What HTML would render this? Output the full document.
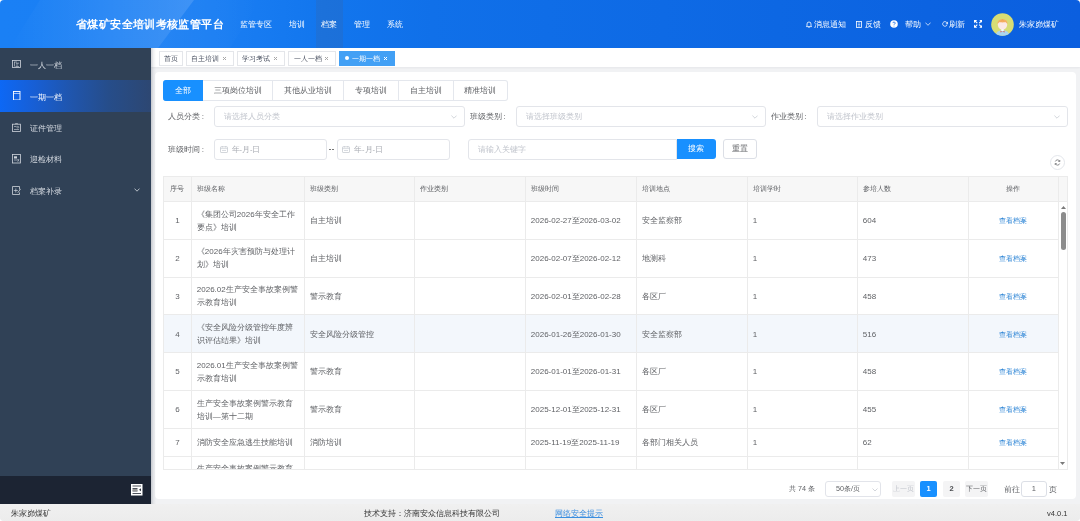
<!DOCTYPE html>
<html><head><meta charset="utf-8">
<style>
*{box-sizing:border-box;margin:0;padding:0}
html,body{width:1080px;height:521px;overflow:hidden;background:#fff}
body{font-family:"Liberation Sans",sans-serif;position:relative;color:#606266;font-size:8px}
.abs{position:absolute}
svg{display:block}
#app{will-change:transform;position:absolute;left:0;top:0;width:1080px;height:521px;border-radius:4px;overflow:hidden;background:#f1f2f4}
/* header */
#hdr{left:0;top:0;width:1080px;height:48px;background:linear-gradient(90deg,#1a80f5 0%,#1a7ef3 20%,#1276ee 30%,#1070e9 40%,#0d67e3 72%,#0b5fdf 100%);overflow:hidden}
#title{left:76px;top:18.3px;font-size:11.2px;letter-spacing:.38px;line-height:13px;font-weight:bold;color:#fff;white-space:nowrap}
.nav{top:20px;font-size:8px;line-height:10px;color:#fff;white-space:nowrap}
#navact{left:316px;top:0;width:27px;height:48px;background:rgba(70,95,140,.2)}
.hr{top:20.3px;font-size:8px;line-height:10px;color:#fff;white-space:nowrap}
/* sidebar */
#side{left:0;top:48px;width:151px;height:455.5px;background:#304156}
#sidebot{left:0;top:476px;width:151px;height:27.5px;background:#1c2433}
.mi{left:0;width:151px;height:31.6px;color:#d5dae1;font-size:8px}
.mi span{position:absolute;left:30px;top:12.6px;line-height:10px;white-space:nowrap}
.mi svg{position:absolute;left:11.5px;top:11.5px}
#miact{background:linear-gradient(90deg,#0d68f5 0%,#175fd6 22%,#1f56b0 45%,#264d8a 72%,#2d4772 100%);color:#fff;height:32px}
/* footer */
#foot{left:0;top:503.5px;width:1080px;height:18px;background:linear-gradient(#f0f0f0,#ececec);font-size:7.5px;color:#333}
#foot div{line-height:11px;white-space:nowrap}
/* tabs */
#tabs{left:151px;top:48px;width:929px;height:19px;background:#fff;box-shadow:0 1px 2px rgba(0,21,41,.05)}
.tag{top:3px;height:14.8px;border:1px solid #e4e6ea;background:#fff;font-size:7px;color:#495060;line-height:13.8px;padding:0 0 0 4.3px;white-space:nowrap}
.tag i{position:absolute;right:6.6px;top:5.2px;width:3px;height:3px;background:linear-gradient(45deg,transparent 42%,#a8a8a8 42%,#a8a8a8 58%,transparent 58%),linear-gradient(-45deg,transparent 42%,#a8a8a8 42%,#a8a8a8 58%,transparent 58%)}
/* card */
#card{left:155px;top:72.2px;width:921px;height:426.4px;background:#fff;border-radius:4px}
.ft{top:80px;height:20.6px;border:1px solid #e4e7ed;border-left:none;font-size:8px;color:#606266;line-height:20px;text-align:center;white-space:nowrap}
.lbl{font-size:8px;line-height:10px;color:#606266;white-space:nowrap}
.inp{height:20.5px;border:1px solid #e3e5ea;border-radius:3px;background:#fff;font-size:7.5px;color:#c0c4cc;line-height:19.5px;padding-left:9px;white-space:nowrap}
.chev{position:absolute;right:7px;top:8px}
.thc{top:0;height:25px;line-height:24.2px;padding:0 5px 0 4.8px;font-size:7.2px;color:#606266;border-right:1px solid #ebebeb;border-bottom:1px solid #ebebeb;white-space:nowrap}
.tr{left:0;width:895px}
.td .cell{position:relative;top:.3px}
.td{top:0;border-right:1px solid #ebebeb;border-bottom:1px solid #ebebeb;display:flex;align-items:center;padding:0 5px 0 4.8px;font-size:8px;color:#606266;line-height:13px}
.td .cell{width:100%;white-space:nowrap}
.lnk{color:#2f86d6;font-size:7px}
.pg{font-size:7.5px;line-height:10px;color:#606266;white-space:nowrap}
.pgb{top:481.2px;height:15.6px;line-height:15.6px;background:#f4f4f5;font-size:7.5px;color:#606266;text-align:center;border-radius:2px;white-space:nowrap}
</style></head><body>
<div id="app">
 <div id="hdr" class="abs">
  <svg class="abs" style="left:0;top:0" width="1080" height="48">
   <defs><linearGradient id="hg1" x1="0" y1="0" x2="1" y2="0"><stop offset="0" stop-color="#fff" stop-opacity="0"/><stop offset="1" stop-color="#fff" stop-opacity=".16"/></linearGradient>
   <linearGradient id="hg2" x1="0" y1="0" x2="1" y2="0"><stop offset="0" stop-color="#fff" stop-opacity=".05"/><stop offset="1" stop-color="#fff" stop-opacity="0"/></linearGradient></defs>
   <polygon points="40,0 194,0 158,48 10,48" fill="url(#hg1)"/>
   <polygon points="194,0 260,0 230,48 158,48" fill="url(#hg2)"/>
  </svg>
  <div id="navact" class="abs"></div>
  <div id="title" class="abs">省煤矿安全培训考核监管平台</div>
  <div class="abs nav" style="left:240px">监管专区</div>
  <div class="abs nav" style="left:289px">培训</div>
  <div class="abs nav" style="left:321px">档案</div>
  <div class="abs nav" style="left:354px">管理</div>
  <div class="abs nav" style="left:387px">系统</div>
  <!-- bell -->
  <svg class="abs" style="left:806px;top:20.5px" width="6" height="7" viewBox="0 0 6 7"><path d="M1 5V3a2 2 0 0 1 4 0v2l.6.6H.4z M2.3 6.3h1.4" stroke="#fff" stroke-width="0.8" fill="none"/></svg>
  <div class="abs hr" style="left:813.5px">消息通知</div>
  <!-- feedback -->
  <svg class="abs" style="left:855.5px;top:20.5px" width="6" height="7" viewBox="0 0 6 7"><rect x=".5" y=".5" width="5" height="6" stroke="#fff" stroke-width=".8" fill="none"/><path d="M1.8 2h2.4M1.8 3.5h2.4M1.8 5h2.4" stroke="#fff" stroke-width=".6"/></svg>
  <div class="abs hr" style="left:865px">反馈</div>
  <!-- help circle -->
  <svg class="abs" style="left:889.7px;top:19.6px" width="8" height="8" viewBox="0 0 8 8"><circle cx="4" cy="4" r="3.8" fill="#fff"/><path d="M2.9 3.1a1.1 1.1 0 1 1 1.6 1c-.4.2-.5.4-.5.8" stroke="#0d63e1" stroke-width=".8" fill="none"/><circle cx="4" cy="6" r=".45" fill="#0d63e1"/></svg>
  <div class="abs hr" style="left:905px">帮助</div>
  <svg class="abs" style="left:925px;top:22.3px" width="6" height="4" viewBox="0 0 6 4"><path d="M.4.6L3 3.3 5.6.6" stroke="#fff" stroke-width=".7" fill="none"/></svg>
  <!-- refresh -->
  <svg class="abs" style="left:942px;top:21px" width="6" height="6" viewBox="0 0 6 6"><path d="M5.2 2.4A2.3 2.3 0 1 0 5.1 3.8" stroke="#fff" stroke-width=".8" fill="none"/><path d="M5.6 .9v1.9H3.8" stroke="#fff" stroke-width=".8" fill="none"/></svg>
  <div class="abs hr" style="left:948.5px">刷新</div>
  <!-- fullscreen -->
  <svg class="abs" style="left:973.6px;top:20.3px" width="8.5" height="7.8" viewBox="0 0 8.5 7.8"><path d="M0 0h3.2L0 3.2z M8.5 0H5.3L8.5 3.2z M0 7.8h3.2L0 4.6z M8.5 7.8H5.3L8.5 4.6z" fill="#fff"/><path d="M1 1L3.3 3.1M7.5 1L5.2 3.1M1 6.8L3.3 4.7M7.5 6.8L5.2 4.7" stroke="#fff" stroke-width="1.1"/></svg>
  <!-- avatar -->
  <svg class="abs" style="left:990.5px;top:13px" width="23" height="23" viewBox="0 0 23 23">
   <defs><clipPath id="av"><circle cx="11.5" cy="11.5" r="11.3"/></clipPath></defs>
   <circle cx="11.5" cy="11.5" r="11.3" fill="#d7dd74"/>
   <g clip-path="url(#av)">
    <path d="M4.6 23c0-3.6 2.6-5.8 6.9-5.8s6.9 2.2 6.9 5.8z" fill="#a9d6f0"/>
    <rect x="10.3" y="15.5" width="2.4" height="2.4" fill="#fff"/>
    <path d="M9.4 17.8l2.1.9 2.1-.9v1.8l-2.1-.8-2.1.8z" fill="#e07060"/>
    <path d="M6.8 11.5c0-1.5.5-2.4 1-2.6h7.4c.5.2 1 1.1 1 2.6 0 3-2.1 5-4.7 5s-4.7-2-4.7-5z" fill="#fbe9e4"/>
    <path d="M6.6 11.2c-.4-3.2 1.8-5 4.9-5s5.3 1.8 4.9 5c-.6-1-1.4-1.8-2.3-2.1-.9.3-1.8.4-2.6.4s-1.7-.1-2.6-.4c-.9.3-1.7 1.1-2.3 2.1z" fill="#f5b060"/>
    <path d="M11.5 6.3c-.3 1.2-1 2.2-2.1 2.8M11.5 6.3c.3 1.2 1 2.2 2.1 2.8" stroke="#f0a050" stroke-width=".5" fill="none"/>
   </g>
  </svg>
  <div class="abs hr" style="left:1019px">朱家峁煤矿</div>
 </div>
 <div id="side" class="abs"></div>
 <div id="sidebot" class="abs"></div>
 <svg class="abs" style="left:131px;top:484px" width="11.5" height="11.5" viewBox="0 0 11.5 11.5"><rect x="0" y="0" width="11.5" height="11.5" fill="#fff"/><path d="M1.5 2h8.5M1.5 9.5h8.5M1.5 4.5h5M1.5 7h5" stroke="#3a3f4a" stroke-width=".9"/><rect x="1.5" y="5" width="5" height="2" fill="#9a9a9a"/><path d="M10 4.2L8 5.75 10 7.3z" fill="#2a2f3a"/></svg>
 <div class="abs mi" style="top:48px">
  <svg width="9" height="8" viewBox="0 0 9 8"><rect x=".5" y=".5" width="8" height="7" stroke="#cfd4db" stroke-width=".8" fill="none"/><path d="M2 2h3M2.5 2v4.5M4 3.2h3M5 3.2v3.3M3.5 6.5h3.5" stroke="#cfd4db" stroke-width=".6" fill="none"/></svg>
  <span>一人一档</span></div>
 <div id="miact" class="abs mi" style="top:79.6px">
  <svg style="left:12.5px;top:11.4px" width="8" height="9.5" viewBox="0 0 8 9.5"><rect x=".5" y=".5" width="6.5" height="8.5" stroke="#fff" stroke-width=".9" fill="none"/><path d="M.5 2.5h6.5" stroke="#fff" stroke-width=".6"/></svg>
  <span style="top:13.2px;left:30px">一期一档</span></div>
 <div class="abs mi" style="top:111.2px">
  <svg width="9" height="9" viewBox="0 0 9 9"><rect x=".5" y="1.2" width="8" height="7.3" stroke="#cfd4db" stroke-width=".8" fill="none"/><path d="M3.5 1.2V.5h2v.7M2 3.5h2.5M2 6.5h5" stroke="#cfd4db" stroke-width=".6" fill="none"/><circle cx="5.8" cy="4.2" r=".9" stroke="#cfd4db" stroke-width=".5" fill="none"/></svg>
  <span>证件管理</span></div>
 <div class="abs mi" style="top:142.8px">
  <svg width="9" height="9.5" viewBox="0 0 9 9.5"><rect x=".5" y=".5" width="8" height="8.5" stroke="#cfd4db" stroke-width=".8" fill="none"/><rect x="2" y="2.3" width="3" height="2.2" fill="#cfd4db"/><path d="M2 6h3M5.5 5l1.5 2.5M7 5L5.5 7.5" stroke="#cfd4db" stroke-width=".6"/></svg>
  <span>迎检材料</span></div>
 <div class="abs mi" style="top:174.4px">
  <svg width="9" height="9" viewBox="0 0 9 9"><path d="M.5 .5h7v3M7.5 6.5v2h-7v-8" stroke="#cfd4db" stroke-width=".8" fill="none"/><path d="M3.8 2.5v4M1.8 4.5h4" stroke="#cfd4db" stroke-width=".7"/><path d="M8.7 2.8L5.8 6.8" stroke="#cfd4db" stroke-width=".8"/></svg>
  <span>档案补录</span>
  <svg style="left:133.5px;top:14px" width="6" height="4" viewBox="0 0 6 4"><path d="M.5.6L3 3.2 5.5.6" stroke="#d5dae1" stroke-width=".8" fill="none"/></svg>
 </div>
 <div id="foot" class="abs">
  <div class="abs" style="left:11px;top:4px">朱家峁煤矿</div>
  <div class="abs" style="left:364px;top:4px">技术支持：济南安众信息科技有限公司</div>
  <div class="abs" style="left:555px;top:4px;color:#3a8ee0;text-decoration:underline">网络安全提示</div>
  <div class="abs" style="left:1047px;top:4px">v4.0.1</div>
 </div>
 <div id="tabs" class="abs">
  <div class="abs tag" style="left:8px;width:23.6px">首页</div>
  <div class="abs tag" style="left:35px;width:48px">自主培训<i></i></div>
  <div class="abs tag" style="left:86.2px;width:47.6px">学习考试<i></i></div>
  <div class="abs tag" style="left:137.3px;width:47.3px">一人一档<i></i></div>
  <div class="abs tag" style="left:188px;width:56px;background:#42a0f5;border-color:#42a0f5;color:#fff;padding-left:11.6px"><b style="position:absolute;left:4.6px;top:4.4px;width:4px;height:4px;border-radius:50%;background:#fff"></b>一期一档<i style="right:7.3px;background:linear-gradient(45deg,transparent 42%,#fff 42%,#fff 58%,transparent 58%),linear-gradient(-45deg,transparent 42%,#fff 42%,#fff 58%,transparent 58%)"></i></div>
 </div>
 <div id="card" class="abs"></div>
 <div class="abs" style="left:151px;top:48px;width:5px;height:455.5px;background:linear-gradient(90deg,rgba(40,50,70,.22),rgba(40,50,70,.07) 50%,rgba(40,50,70,0))"></div>
 <div class="abs ft" style="left:163px;width:40.2px;background:#1890ff;border-color:#1890ff;color:#fff;border-radius:3px 0 0 3px">全部</div>
 <div class="abs ft" style="left:203.2px;width:70.2px">三项岗位培训</div>
 <div class="abs ft" style="left:273.4px;width:70.2px">其他从业培训</div>
 <div class="abs ft" style="left:343.6px;width:55.1px">专项培训</div>
 <div class="abs ft" style="left:398.7px;width:55px">自主培训</div>
 <div class="abs ft" style="left:453.7px;width:54.5px;border-radius:0 3px 3px 0">精准培训</div>
 <div class="abs lbl" style="left:168px;top:111.5px">人员分类<span style="margin-left:1.8px">:</span></div>
 <div class="abs inp" style="left:214px;top:106px;width:251px">请选择人员分类<svg class="chev" width="6" height="4" viewBox="0 0 6 4"><path d="M.4.6L3 3.2 5.6.6" stroke="#c0c4cc" stroke-width=".7" fill="none"/></svg></div>
 <div class="abs lbl" style="left:469.5px;top:111.5px">班级类别<span style="margin-left:1.8px">:</span></div>
 <div class="abs inp" style="left:515.6px;top:106px;width:250px">请选择班级类别<svg class="chev" width="6" height="4" viewBox="0 0 6 4"><path d="M.4.6L3 3.2 5.6.6" stroke="#c0c4cc" stroke-width=".7" fill="none"/></svg></div>
 <div class="abs lbl" style="left:770.5px;top:111.5px">作业类别<span style="margin-left:1.8px">:</span></div>
 <div class="abs inp" style="left:817px;top:106px;width:251px">请选择作业类别<svg class="chev" width="6" height="4" viewBox="0 0 6 4"><path d="M.4.6L3 3.2 5.6.6" stroke="#c0c4cc" stroke-width=".7" fill="none"/></svg></div>
 <div class="abs lbl" style="left:168px;top:144.5px">班级时间<span style="margin-left:1.8px">:</span></div>
 <div class="abs inp" style="left:214px;top:139.4px;width:113px;padding-left:16.5px;color:#a8abb2">年-月-日<svg class="abs" style="left:4.5px;top:6px" width="8" height="7" viewBox="0 0 8 7"><rect x=".5" y=".8" width="7" height="5.7" rx=".6" stroke="#c0c4cc" stroke-width=".7" fill="none"/><path d="M.5 2.6h7M2.3 0v1.5M5.7 0v1.5M2 4.5h4" stroke="#c0c4cc" stroke-width=".6"/></svg></div>
 <div class="abs" style="left:329px;top:148.5px;width:5px;height:1.6px;background:#777;border-left:2px solid #777;border-right:2px solid #777;background:transparent"></div>
 <div class="abs inp" style="left:336.6px;top:139.4px;width:113px;padding-left:16.5px;color:#a8abb2">年-月-日<svg class="abs" style="left:4.5px;top:6px" width="8" height="7" viewBox="0 0 8 7"><rect x=".5" y=".8" width="7" height="5.7" rx=".6" stroke="#c0c4cc" stroke-width=".7" fill="none"/><path d="M.5 2.6h7M2.3 0v1.5M5.7 0v1.5M2 4.5h4" stroke="#c0c4cc" stroke-width=".6"/></svg></div>
 <div class="abs inp" style="left:468px;top:139.4px;width:209px;border-radius:3px 0 0 3px;padding-left:8.5px">请输入关键字</div>
 <div class="abs" style="left:676.5px;top:139.2px;width:39.5px;height:20px;background:#1890ff;border-radius:0 3px 3px 0;color:#fff;font-size:7.5px;text-align:center;line-height:20px">搜索</div>
 <div class="abs" style="left:723.4px;top:139.4px;width:33.5px;height:19.4px;border:1px solid #dcdfe6;border-radius:3px;color:#606266;font-size:7.5px;text-align:center;line-height:17.4px">重置</div>
 <svg class="abs" style="left:1049.5px;top:154.5px" width="15" height="15" viewBox="0 0 15 15"><circle cx="7.5" cy="7.5" r="7" stroke="#dcdfe6" stroke-width=".8" fill="#fff"/><path d="M9.6 6.2A2.3 2.3 0 0 0 5.3 6.5M5.4 8.8a2.3 2.3 0 0 0 4.3-.3" stroke="#606266" stroke-width=".7" fill="none"/><path d="M9.8 5v1.5H8.3M5.2 10V8.5h1.5" stroke="#606266" stroke-width=".7" fill="none"/></svg>
<div id="tbl" class="abs" style="left:163px;top:176px;width:905px;height:294px;overflow:hidden;border:1px solid #ebebeb">
<div class="abs th" style="left:0;top:0;width:904px;height:25px;background:#f7f7f7"></div>
<div class="abs thc" style="left:0.0px;width:28.0px;text-align:center">序号</div>
<div class="abs thc" style="left:28.0px;width:113.0px;text-align:left">班级名称</div>
<div class="abs thc" style="left:141.0px;width:110.0px;text-align:left">班级类别</div>
<div class="abs thc" style="left:251.0px;width:111.0px;text-align:left">作业类别</div>
<div class="abs thc" style="left:362.0px;width:111.0px;text-align:left">班级时间</div>
<div class="abs thc" style="left:473.0px;width:111.0px;text-align:left">培训地点</div>
<div class="abs thc" style="left:584.0px;width:110.0px;text-align:left">培训学时</div>
<div class="abs thc" style="left:694.0px;width:111.0px;text-align:left">参培人数</div>
<div class="abs thc" style="left:805.0px;width:90.0px;text-align:center">操作</div>
<div class="abs tr" style="top:25px;height:37.8px;background:#fff">
<div class="abs td" style="left:0.0px;width:28.0px;height:37.8px;text-align:center"><div class="cell">1</div></div>
<div class="abs td" style="left:28.0px;width:113.0px;height:37.8px;text-align:left"><div class="cell">《集团公司2026年安全工作<br>要点》培训</div></div>
<div class="abs td" style="left:141.0px;width:110.0px;height:37.8px;text-align:left"><div class="cell">自主培训</div></div>
<div class="abs td" style="left:251.0px;width:111.0px;height:37.8px;text-align:left"><div class="cell"></div></div>
<div class="abs td" style="left:362.0px;width:111.0px;height:37.8px;text-align:left"><div class="cell">2026-02-27至2026-03-02</div></div>
<div class="abs td" style="left:473.0px;width:111.0px;height:37.8px;text-align:left"><div class="cell">安全监察部</div></div>
<div class="abs td" style="left:584.0px;width:110.0px;height:37.8px;text-align:left"><div class="cell">1</div></div>
<div class="abs td" style="left:694.0px;width:111.0px;height:37.8px;text-align:left"><div class="cell">604</div></div>
<div class="abs td" style="left:805.0px;width:90.0px;height:37.8px;text-align:center"><div class="cell"><span class="lnk">查看档案</span></div></div>
</div>
<div class="abs tr" style="top:62.8px;height:37.8px;background:#fff">
<div class="abs td" style="left:0.0px;width:28.0px;height:37.8px;text-align:center"><div class="cell">2</div></div>
<div class="abs td" style="left:28.0px;width:113.0px;height:37.8px;text-align:left"><div class="cell">《2026年灾害预防与处理计<br>划》培训</div></div>
<div class="abs td" style="left:141.0px;width:110.0px;height:37.8px;text-align:left"><div class="cell">自主培训</div></div>
<div class="abs td" style="left:251.0px;width:111.0px;height:37.8px;text-align:left"><div class="cell"></div></div>
<div class="abs td" style="left:362.0px;width:111.0px;height:37.8px;text-align:left"><div class="cell">2026-02-07至2026-02-12</div></div>
<div class="abs td" style="left:473.0px;width:111.0px;height:37.8px;text-align:left"><div class="cell">地测科</div></div>
<div class="abs td" style="left:584.0px;width:110.0px;height:37.8px;text-align:left"><div class="cell">1</div></div>
<div class="abs td" style="left:694.0px;width:111.0px;height:37.8px;text-align:left"><div class="cell">473</div></div>
<div class="abs td" style="left:805.0px;width:90.0px;height:37.8px;text-align:center"><div class="cell"><span class="lnk">查看档案</span></div></div>
</div>
<div class="abs tr" style="top:100.6px;height:37.8px;background:#fff">
<div class="abs td" style="left:0.0px;width:28.0px;height:37.8px;text-align:center"><div class="cell">3</div></div>
<div class="abs td" style="left:28.0px;width:113.0px;height:37.8px;text-align:left"><div class="cell">2026.02生产安全事故案例警<br>示教育培训</div></div>
<div class="abs td" style="left:141.0px;width:110.0px;height:37.8px;text-align:left"><div class="cell">警示教育</div></div>
<div class="abs td" style="left:251.0px;width:111.0px;height:37.8px;text-align:left"><div class="cell"></div></div>
<div class="abs td" style="left:362.0px;width:111.0px;height:37.8px;text-align:left"><div class="cell">2026-02-01至2026-02-28</div></div>
<div class="abs td" style="left:473.0px;width:111.0px;height:37.8px;text-align:left"><div class="cell">各区厂</div></div>
<div class="abs td" style="left:584.0px;width:110.0px;height:37.8px;text-align:left"><div class="cell">1</div></div>
<div class="abs td" style="left:694.0px;width:111.0px;height:37.8px;text-align:left"><div class="cell">458</div></div>
<div class="abs td" style="left:805.0px;width:90.0px;height:37.8px;text-align:center"><div class="cell"><span class="lnk">查看档案</span></div></div>
</div>
<div class="abs tr" style="top:138.4px;height:37.8px;background:#f3f7fc">
<div class="abs td" style="left:0.0px;width:28.0px;height:37.8px;text-align:center"><div class="cell">4</div></div>
<div class="abs td" style="left:28.0px;width:113.0px;height:37.8px;text-align:left"><div class="cell">《安全风险分级管控年度辨<br>识评估结果》培训</div></div>
<div class="abs td" style="left:141.0px;width:110.0px;height:37.8px;text-align:left"><div class="cell">安全风险分级管控</div></div>
<div class="abs td" style="left:251.0px;width:111.0px;height:37.8px;text-align:left"><div class="cell"></div></div>
<div class="abs td" style="left:362.0px;width:111.0px;height:37.8px;text-align:left"><div class="cell">2026-01-26至2026-01-30</div></div>
<div class="abs td" style="left:473.0px;width:111.0px;height:37.8px;text-align:left"><div class="cell">安全监察部</div></div>
<div class="abs td" style="left:584.0px;width:110.0px;height:37.8px;text-align:left"><div class="cell">1</div></div>
<div class="abs td" style="left:694.0px;width:111.0px;height:37.8px;text-align:left"><div class="cell">516</div></div>
<div class="abs td" style="left:805.0px;width:90.0px;height:37.8px;text-align:center"><div class="cell"><span class="lnk">查看档案</span></div></div>
</div>
<div class="abs tr" style="top:176.2px;height:37.8px;background:#fff">
<div class="abs td" style="left:0.0px;width:28.0px;height:37.8px;text-align:center"><div class="cell">5</div></div>
<div class="abs td" style="left:28.0px;width:113.0px;height:37.8px;text-align:left"><div class="cell">2026.01生产安全事故案例警<br>示教育培训</div></div>
<div class="abs td" style="left:141.0px;width:110.0px;height:37.8px;text-align:left"><div class="cell">警示教育</div></div>
<div class="abs td" style="left:251.0px;width:111.0px;height:37.8px;text-align:left"><div class="cell"></div></div>
<div class="abs td" style="left:362.0px;width:111.0px;height:37.8px;text-align:left"><div class="cell">2026-01-01至2026-01-31</div></div>
<div class="abs td" style="left:473.0px;width:111.0px;height:37.8px;text-align:left"><div class="cell">各区厂</div></div>
<div class="abs td" style="left:584.0px;width:110.0px;height:37.8px;text-align:left"><div class="cell">1</div></div>
<div class="abs td" style="left:694.0px;width:111.0px;height:37.8px;text-align:left"><div class="cell">458</div></div>
<div class="abs td" style="left:805.0px;width:90.0px;height:37.8px;text-align:center"><div class="cell"><span class="lnk">查看档案</span></div></div>
</div>
<div class="abs tr" style="top:214.0px;height:37.8px;background:#fff">
<div class="abs td" style="left:0.0px;width:28.0px;height:37.8px;text-align:center"><div class="cell">6</div></div>
<div class="abs td" style="left:28.0px;width:113.0px;height:37.8px;text-align:left"><div class="cell">生产安全事故案例警示教育<br>培训—第十二期</div></div>
<div class="abs td" style="left:141.0px;width:110.0px;height:37.8px;text-align:left"><div class="cell">警示教育</div></div>
<div class="abs td" style="left:251.0px;width:111.0px;height:37.8px;text-align:left"><div class="cell"></div></div>
<div class="abs td" style="left:362.0px;width:111.0px;height:37.8px;text-align:left"><div class="cell">2025-12-01至2025-12-31</div></div>
<div class="abs td" style="left:473.0px;width:111.0px;height:37.8px;text-align:left"><div class="cell">各区厂</div></div>
<div class="abs td" style="left:584.0px;width:110.0px;height:37.8px;text-align:left"><div class="cell">1</div></div>
<div class="abs td" style="left:694.0px;width:111.0px;height:37.8px;text-align:left"><div class="cell">455</div></div>
<div class="abs td" style="left:805.0px;width:90.0px;height:37.8px;text-align:center"><div class="cell"><span class="lnk">查看档案</span></div></div>
</div>
<div class="abs tr" style="top:251.8px;height:28px;background:#fff">
<div class="abs td" style="left:0.0px;width:28.0px;height:28px;text-align:center"><div class="cell">7</div></div>
<div class="abs td" style="left:28.0px;width:113.0px;height:28px;text-align:left"><div class="cell">消防安全应急逃生技能培训</div></div>
<div class="abs td" style="left:141.0px;width:110.0px;height:28px;text-align:left"><div class="cell">消防培训</div></div>
<div class="abs td" style="left:251.0px;width:111.0px;height:28px;text-align:left"><div class="cell"></div></div>
<div class="abs td" style="left:362.0px;width:111.0px;height:28px;text-align:left"><div class="cell">2025-11-19至2025-11-19</div></div>
<div class="abs td" style="left:473.0px;width:111.0px;height:28px;text-align:left"><div class="cell">各部门相关人员</div></div>
<div class="abs td" style="left:584.0px;width:110.0px;height:28px;text-align:left"><div class="cell">1</div></div>
<div class="abs td" style="left:694.0px;width:111.0px;height:28px;text-align:left"><div class="cell">62</div></div>
<div class="abs td" style="left:805.0px;width:90.0px;height:28px;text-align:center"><div class="cell"><span class="lnk">查看档案</span></div></div>
</div>
<div class="abs tr" style="top:279.8px;height:37.8px;background:#fff">
<div class="abs td" style="left:0.0px;width:28.0px;height:37.8px;text-align:center"><div class="cell">8</div></div>
<div class="abs td" style="left:28.0px;width:113.0px;height:37.8px;text-align:left"><div class="cell">生产安全事故案例警示教育<br>培训—第十一期</div></div>
<div class="abs td" style="left:141.0px;width:110.0px;height:37.8px;text-align:left"><div class="cell">警示教育</div></div>
<div class="abs td" style="left:251.0px;width:111.0px;height:37.8px;text-align:left"><div class="cell"></div></div>
<div class="abs td" style="left:362.0px;width:111.0px;height:37.8px;text-align:left"><div class="cell">2025-11-01至2025-11-30</div></div>
<div class="abs td" style="left:473.0px;width:111.0px;height:37.8px;text-align:left"><div class="cell">各区厂</div></div>
<div class="abs td" style="left:584.0px;width:110.0px;height:37.8px;text-align:left"><div class="cell">1</div></div>
<div class="abs td" style="left:694.0px;width:111.0px;height:37.8px;text-align:left"><div class="cell">460</div></div>
<div class="abs td" style="left:805.0px;width:90.0px;height:37.8px;text-align:center"><div class="cell"><span class="lnk">查看档案</span></div></div>
</div>
<div class="abs" style="left:895px;top:25px;width:8px;height:269px;background:#fff"></div>
<div class="abs" style="left:895px;top:0;width:8px;height:25px;background:#f7f7f7;border-bottom:1px solid #ebebeb"></div>
<div class="abs" style="left:897px;top:34.5px;width:5.2px;height:38.3px;border-radius:3px;background:#8c8c8c"></div>
<svg class="abs" style="left:897px;top:28.5px" width="5" height="3" viewBox="0 0 5 3"><path d="M0 3L2.5 0 5 3z" fill="#7a7a7a"/></svg>
<svg class="abs" style="left:896px;top:285px" width="5" height="3" viewBox="0 0 5 3"><path d="M0 0L2.5 3 5 0z" fill="#7a7a7a"/></svg>
</div>
<div class="abs pg" style="left:789px;top:484px;font-size:7.2px">共 74 条</div>
<div class="abs" style="left:825px;top:481px;width:56px;height:16px;border:1px solid #e2e4ea;border-radius:3px;background:#fff;font-size:7.2px;color:#606266;line-height:14px;padding-left:10px">50条/页</div>
<svg class="abs" style="left:872px;top:487.5px" width="6" height="4" viewBox="0 0 6 4"><path d="M0.5 0.5L3 3L5.5 0.5" stroke="#c0c4cc" stroke-width="0.7" fill="none"/></svg>
<div class="abs pgb" style="left:892px;width:23px;color:#c0c4cc;font-size:7px">上一页</div>
<div class="abs pgb" style="left:920px;width:17px;background:#1890ff;color:#fff;font-weight:bold">1</div>
<div class="abs pgb" style="left:943px;width:17px;font-weight:bold;color:#4a4c50">2</div>
<div class="abs pgb" style="left:965px;width:23px;font-size:7px">下一页</div>
<div class="abs pg" style="left:1003.5px;top:485px">前往</div>
<div class="abs" style="left:1021px;top:481.3px;width:25.5px;height:16px;border:1px solid #dcdfe6;border-radius:3px;background:#fff;font-size:7.5px;color:#606266;line-height:14.5px;text-align:center">1</div>
<div class="abs pg" style="left:1049px;top:485px">页</div>

</div>
</body></html>
